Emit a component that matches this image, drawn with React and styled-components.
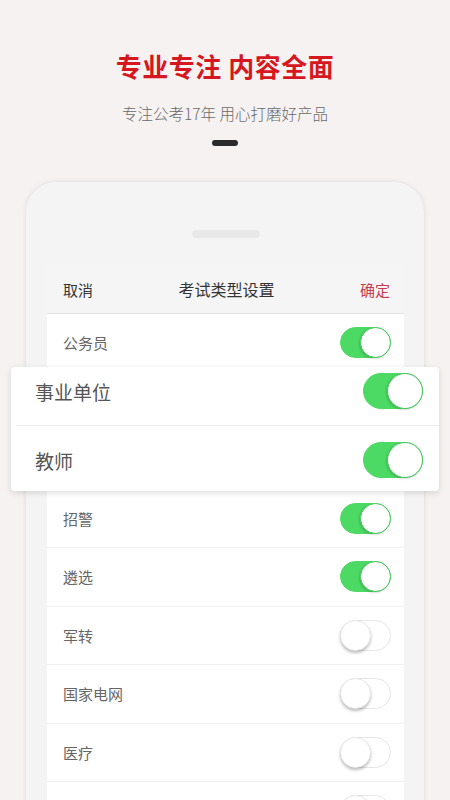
import styled, { createGlobalStyle } from "styled-components";

const GlobalStyle = createGlobalStyle`
  html, body {
    margin: 0;
    padding: 0;
    background: #f6f2f1;
    font-family: "Noto Sans CJK SC", "Noto Sans", sans-serif;
  }
`;

const Page = styled.div`
  height: 800px;
  overflow: hidden;
  display: flex;
  flex-direction: column;
  align-items: center;
  background: #f6f2f1;

  & > * {
    flex-shrink: 0;
  }
`;

const Title = styled.h1`
  margin: 48px 0 0;
  font-size: 26px;
  line-height: 36px;
  font-weight: 700;
  color: #d6171f;
  letter-spacing: 0.5px;
`;

const Subtitle = styled.p`
  margin: 18px 0 0;
  font-size: 15.5px;
  line-height: 22px;
  font-weight: 300;
  color: #6a6a6a;
`;

const Dash = styled.div`
  margin-top: 16px;
  width: 26px;
  height: 6px;
  border-radius: 3px;
  background: #2b2b2b;
`;

const Phone = styled.div`
  position: relative;
  margin-top: 36px;
  width: 398px;
  height: 640px;
  box-sizing: border-box;
  padding: 48px 20px 0 21px;
  background: #f4f4f4;
  border-radius: 30px 30px 0 0;
  box-shadow: 0 0 5px rgba(0, 0, 0, 0.1);
  display: flex;
  flex-direction: column;
  align-items: center;
`;

const Speaker = styled.div`
  flex-shrink: 0;
  width: 68px;
  height: 8px;
  border-radius: 4px;
  background: #e9e9e9;
`;

const Sheet = styled.div`
  margin-top: 27px;
  width: 100%;
  display: flex;
  flex-direction: column;
`;

const Header = styled.div`
  height: 48px;
  display: flex;
  align-items: center;
  justify-content: space-between;
  padding: 0 14px 0 16px;
  background: #f5f5f5;
  border-bottom: 1px solid #e2e2e2;
`;

const HeaderAction = styled.span`
  font-size: 15px;
  color: ${(p) => (p.$accent ? "#c83a4e" : "#333")};
`;

const HeaderTitle = styled.span`
  font-size: 16px;
  color: #333;
`;

const Row = styled.div`
  flex-shrink: 0;
  height: 57.5px;
  display: flex;
  align-items: center;
  justify-content: space-between;
  padding: 0 13px 0 16px;
  background: #fff;
  border-bottom: 1px solid #f0f0f0;
`;

const Label = styled.span`
  font-size: 15px;
  color: #666;
`;

const FloatCard = styled.div`
  position: absolute;
  top: 185px;
  left: -15px;
  right: -15px;
  padding: 6px 0 13px;
  background: #fff;
  border-radius: 4px;
  box-shadow: 0 2px 6px rgba(0, 0, 0, 0.13);
`;

const FloatRow = styled.div`
  height: 36px;
  display: flex;
  align-items: center;
  justify-content: space-between;
  padding: 0 16px 0 24px;
`;

const FloatLabel = styled.span`
  font-size: 19px;
  color: #555;
`;

const FloatDivider = styled.div`
  height: 1px;
  margin: 16px 0 16px 5px;
  background: #ececec;
`;

const Track = styled.div`
  position: relative;
  flex-shrink: 0;
  box-sizing: border-box;
  width: ${(p) => (p.$large ? 60 : 51)}px;
  height: ${(p) => (p.$large ? 36 : 31)}px;
  border-radius: 20px;
  background: ${(p) => (p.$on ? "#4cd964" : "#fff")};
  border: 1px solid ${(p) => (p.$on ? "#4cd964" : "#e6e6e6")};
`;

const Knob = styled.div`
  position: absolute;
  top: -1px;
  ${(p) => (p.$on ? "right: -1px;" : "left: -1px;")}
  box-sizing: border-box;
  width: ${(p) => (p.$large ? 36 : 31)}px;
  height: ${(p) => (p.$large ? 36 : 31)}px;
  border-radius: 50%;
  background: #fff;
  border: ${(p) => (p.$on ? "1.5px solid #45c85c" : "1px solid #e8e8e8")};
  box-shadow: ${(p) =>
    p.$on ? "-1px 1px 2px rgba(0,0,0,0.15)" : "0 2px 3px rgba(0,0,0,0.25)"};
`;

const Toggle = ({ on, large }) => (
  <Track $on={on} $large={large}>
    <Knob $on={on} $large={large} />
  </Track>
);

const types = [
  { name: "公务员", on: true },
  { name: "事业单位", on: true },
  { name: "教师", on: true },
  { name: "招警", on: true },
  { name: "遴选", on: true },
  { name: "军转", on: false },
  { name: "国家电网", on: false },
  { name: "医疗", on: false },
  { name: "", on: false },
];

export default function App() {
  return (
    <>
      <GlobalStyle />
      <Page>
        <Title>专业专注 内容全面</Title>
        <Subtitle>专注公考17年 用心打磨好产品</Subtitle>
        <Dash />
        <Phone>
          <Speaker />
          <Sheet>
            <Header>
              <HeaderAction>取消</HeaderAction>
              <HeaderTitle>考试类型设置</HeaderTitle>
              <HeaderAction $accent>确定</HeaderAction>
            </Header>
            {types.map((t, i) => (
              <Row key={i}>
                <Label>{t.name}</Label>
                <Toggle on={t.on} />
              </Row>
            ))}
          </Sheet>
          <FloatCard>
            <FloatRow>
              <FloatLabel>事业单位</FloatLabel>
              <Toggle on large />
            </FloatRow>
            <FloatDivider />
            <FloatRow>
              <FloatLabel>教师</FloatLabel>
              <Toggle on large />
            </FloatRow>
          </FloatCard>
        </Phone>
      </Page>
    </>
  );
}
